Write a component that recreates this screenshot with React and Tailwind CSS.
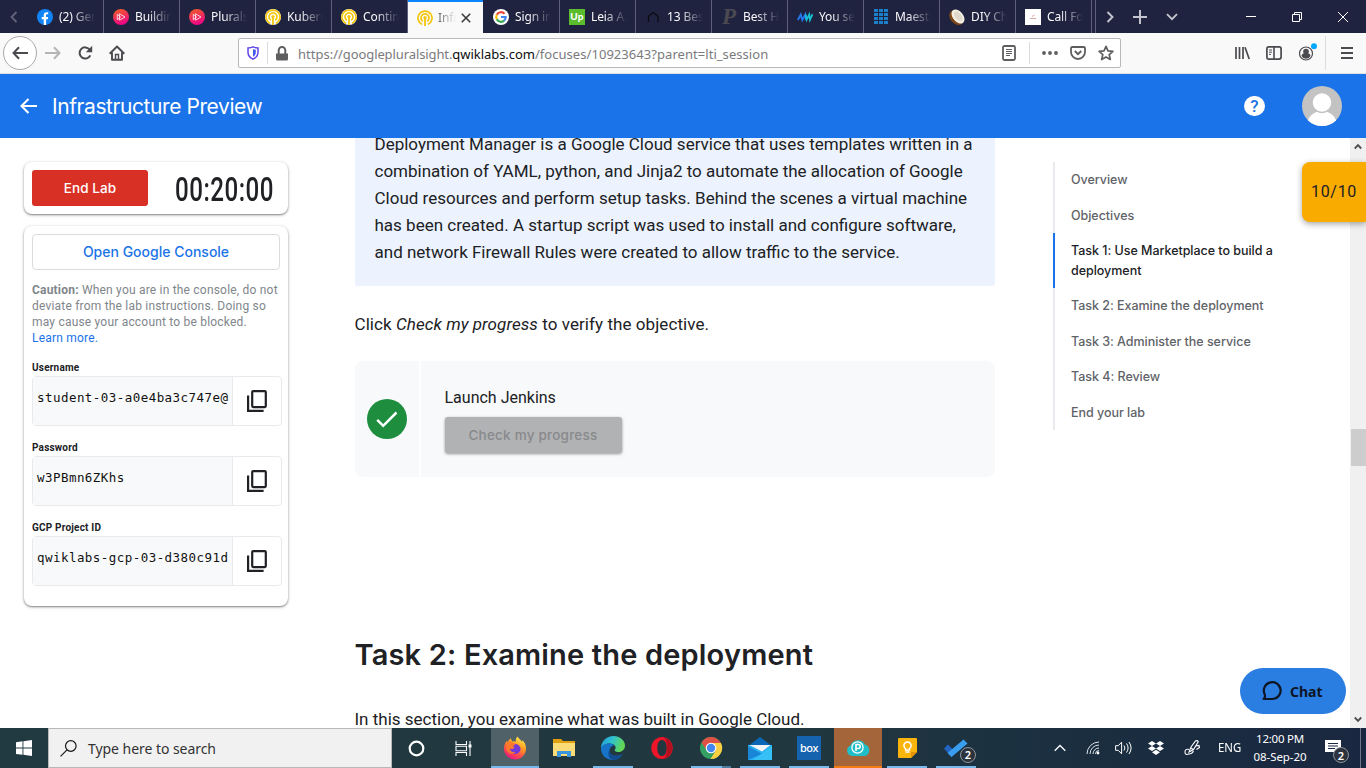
import React from "react";

const gs = "font-['Inter',sans-serif]";

function Facebook() {
  return (
    <svg width="16" height="16" viewBox="0 0 16 16">
      <circle cx="8" cy="8" r="8" fill="#1284f5" />
      <path d="M6.700 16V10.300H4.700V8h2V6.200c0-2 1.100-3 3-3 .7 0 1.500.1 1.500.1v2h-1c-1 0-1.200.6-1.200 1.200V8h2.200l-.4 2.300H9.100V16z" fill="#fff" />
    </svg>
  );
}
function Plural() {
  return (
    <svg width="16" height="16" viewBox="0 0 16 16">
      <defs>
        <linearGradient id="pl" x1="0.3" y1="0" x2="0.6" y2="1">
          <stop offset="0" stopColor="#f15b2a" />
          <stop offset="1" stopColor="#ec008c" />
        </linearGradient>
      </defs>
      <circle cx="8" cy="8" r="8" fill="url(#pl)" />
      <path d="M4.300 5.300v5.400L7.500 8zM6.500 4.800L12 8l-5.500 3.200z" fill="none" stroke="#ffe3ea" strokeWidth="0.900" />
    </svg>
  );
}
function Qwik({ light }) {
  return (
    <svg width="16" height="16" viewBox="0 0 16 16">
      <circle cx="8" cy="8" r="8" fill={light ? "#f9f9fa" : "#fff"} />
      <g fill="none" stroke="#f3c60c" strokeWidth="1.700">
        <path d="M5.200 14.500A7 7 0 1 1 10.800 14.500" />
        <path d="M5.800 11.200A4 4 0 1 1 10.200 11.200" />
      </g>
      <circle cx="8" cy="7.800" r="1.700" fill="#f3c60c" />
      <path d="M7.100 8h1.800v8H7.100z" fill="#f3c60c" />
    </svg>
  );
}
function Google() {
  return (
    <svg width="16" height="16" viewBox="0 0 16 16">
      <circle cx="8" cy="8" r="8" fill="#fff" />
      <g fill="none" strokeWidth="2.200">
        <path d="M11.500 4.700A4.800 4.800 0 0 0 3.800 5.700" stroke="#ea4335" />
        <path d="M3.800 5.700A4.800 4.800 0 0 0 3.800 10.300" stroke="#fbbc05" />
        <path d="M3.800 10.300A4.800 4.800 0 0 0 11.200 11.600" stroke="#34a853" />
        <path d="M11.200 11.600A4.800 4.800 0 0 0 12.700 8H8" stroke="#4285f4" />
      </g>
    </svg>
  );
}
function Up() {
  return <span className="flex h-4 w-4 items-center justify-center bg-[#5bbc2e] pb-0.5 font-['Lato',sans-serif] text-[10px] font-black leading-none tracking-[0.2px] text-white">Up</span>;
}
function House() {
  return (
    <svg width="16" height="16" viewBox="0 0 16 16">
      <path d="M3.500 13V7.200L8.200 3.500 13 7.200V13" fill="none" stroke="#0b0b12" strokeWidth="1.300" />
    </svg>
  );
}
function PLogo() {
  return <span className="block w-4 text-center font-['Liberation_Serif',serif] text-[23px] font-bold italic leading-4 text-[#4a4a50]">P</span>;
}
function Aww() {
  return (
    <svg width="16" height="16" viewBox="0 0 16 16">
      <path d="M.8 11l3-5.500L5.300 11l3-5.500L8.900 11" fill="none" stroke="#2376ee" strokeWidth="1.900" />
      <path d="M8.500 5.500L9.600 10.800l2.600-5.300.8 5.300 2.500-5.600" fill="none" stroke="#16bfd0" strokeWidth="1.800" />
    </svg>
  );
}
function Grid16() {
  return (
    <svg width="16" height="16" viewBox="0 0 16 16" fill="#1b80c9">
      {[0, 1, 2, 3].map((r) => [0, 1, 2].map((c) => <rect key={r + "-" + c} x={1 + c * 5} y={r * 4} width="4" height="3" />))}
    </svg>
  );
}
function Coconut() {
  return (
    <svg width="16" height="16" viewBox="0 0 16 16">
      <ellipse cx="7.300" cy="8.600" rx="8.300" ry="6" transform="rotate(48 7.300 8.600)" fill="#7a4518" />
      <ellipse cx="9" cy="7.500" rx="8" ry="5.200" transform="rotate(50 9 7.500)" fill="#f3ede2" />
      <ellipse cx="9.300" cy="7.200" rx="5.600" ry="3.200" transform="rotate(50 9.300 7.200)" fill="#e0d8cc" />
    </svg>
  );
}
function Call() {
  return (
    <svg width="16" height="16" viewBox="0 0 16 16">
      <path d="M0 0h16v16H0z" fill="#fff" />
      <path d="M7 7.500l2.500-1.500M5 9.500h6" stroke="#dba9a4" strokeWidth="1" />
    </svg>
  );
}

const tabs = [
  { t: "(2) Gene", i: <Facebook /> },
  { t: "Building", i: <Plural /> },
  { t: "Pluralsi", i: <Plural /> },
  { t: "Kuberne", i: <Qwik /> },
  { t: "Continui", i: <Qwik /> },
  { t: "Infr", i: <Qwik light />, active: true },
  { t: "Sign in t", i: <Google /> },
  { t: "Leia A. D", i: <Up /> },
  { t: "13 Best", i: <House /> },
  { t: "Best Ho", i: <PLogo /> },
  { t: "You sen", i: <Aww /> },
  { t: "Maestro", i: <Grid16 /> },
  { t: "DIY Cho", i: <Coconut /> },
  { t: "Call For", i: <Call /> },
];

function Tab({ tab }) {
  if (tab.active)
    return (
      <div className="flex h-[33px] w-[75px] shrink-0 items-center border-t-2 border-[#0a84ff] bg-[#f9f9fa] pl-[9px] text-[#0c0c0d]">
        <span className="h-4 w-4 shrink-0">{tab.i}</span>
        <span className="ml-[5px] w-[18px] shrink-0 overflow-hidden whitespace-nowrap [mask-image:linear-gradient(to_right,#000a,transparent)]">{tab.t}</span>
        <svg className="ml-[5px]" width="10" height="10" viewBox="0 0 10 10"><path d="M.8.8l8.400 8.400M9.200.8L.8 9.200" stroke="#3a3a3c" strokeWidth="1.600" /></svg>
      </div>
    );
  return (
    <div className="flex h-[33px] w-[76px] shrink-0 items-center border-r border-[#5f6079] pl-[9px] pt-px text-[#f9f9fa]">
      <span className="h-4 w-4 shrink-0">{tab.i}</span>
      <span className="ml-[6px] w-[36px] overflow-hidden whitespace-nowrap [mask-image:linear-gradient(to_right,#000_35%,transparent)]">{tab.t}</span>
    </div>
  );
}

function TabBar() {
  return (
    <div className="flex h-[33px] items-center bg-[#202340] font-['Noto_Sans',sans-serif] text-[12px] tracking-[-0.1px]">
      <div className="flex w-7 shrink-0 justify-center">
        <svg width="8" height="12" viewBox="0 0 8 12"><path d="M6.500 1L1.500 6l5 5" fill="none" stroke="#62647a" strokeWidth="1.800" /></svg>
      </div>
      {tabs.slice(0, 6).map((t, i) => <Tab key={i} tab={t} />)}
      <div className="flex pl-px">
        {tabs.slice(6).map((t, i) => <Tab key={i} tab={t} />)}
      </div>
      <div className="flex flex-1 items-center self-stretch text-[#c4c4ce]">
        <span className="ml-[3px] h-full w-px bg-[#5f6079]" />
        <svg className="ml-[10px]" width="8" height="12" viewBox="0 0 8 12"><path d="M1.500 1l5 5-5 5" fill="none" stroke="currentColor" strokeWidth="1.900" /></svg>
        <svg className="ml-[19px]" width="14" height="14" viewBox="0 0 14 14"><path d="M7 0v14M0 7h14" stroke="currentColor" strokeWidth="2" /></svg>
        <svg className="ml-[19px]" width="12" height="8" viewBox="0 0 12 8"><path d="M1 1.200l5 5 5-5" fill="none" stroke="currentColor" strokeWidth="1.900" /></svg>
        <svg className="ml-[68px]" width="10" height="10" viewBox="0 0 10 10"><path d="M0 4.500h10" stroke="#fff" /></svg>
        <svg className="ml-[36px]" width="10" height="10" viewBox="0 0 10 10"><path d="M.5 2.500h7v7h-7zM2.500 2.500v-2h7v7h-2" fill="none" stroke="#fff" /></svg>
        <svg className="ml-[36px]" width="10" height="10" viewBox="0 0 10 10"><path d="M0 0l10 10M10 0L0 10" stroke="#fff" /></svg>
      </div>
    </div>
  );
}

function NavBar() {
  return (
    <div className="flex h-[41px] items-center border-b border-[#e0e0e2] bg-[#f9f9fa] text-[#4a4a4f]">
      <div className="ml-[3px] flex h-[34px] w-[34px] items-center justify-center rounded-full border border-[#a9a9ac] bg-white">
        <svg width="16" height="14" viewBox="0 0 16 14"><path d="M7 1.200L1.500 7 7 12.800M1.500 7H16" fill="none" stroke="currentColor" strokeWidth="2" /></svg>
      </div>
      <svg className="ml-2" width="16" height="14" viewBox="0 0 16 14"><path d="M9 1.200L14.500 7 9 12.800M14.500 7H0" fill="none" stroke="#b5b5b8" strokeWidth="2" /></svg>
      <svg className="ml-4" width="16" height="16" viewBox="0 0 16 16"><path d="M13.300 10.300A5.600 5.600 0 1 1 12.600 4.500" fill="none" stroke="currentColor" strokeWidth="2" /><path d="M15.200.8v6.400H8.800z" fill="currentColor" /></svg>
      <svg className="ml-4" width="16" height="16" viewBox="0 0 16 16"><path d="M.7 8.700L8 1.500l7.300 7.200M3 7.500v7.300h10V7.500" fill="none" stroke="currentColor" strokeWidth="1.900" strokeLinejoin="round" /><path d="M6.500 15V9.500h3V15" fill="none" stroke="currentColor" strokeWidth="1.400" /></svg>
      <div className="ml-[113px] flex h-[30px] w-[883px] items-center rounded-[2px] border border-[#b9b9bb] bg-white">
        <svg className="ml-2" width="12" height="14" viewBox="0 0 12 14"><path d="M6 .9c1.500.8 3 1 5 1v4.300c0 3.300-2 5.500-5 6.900C3 11.700 1 9.500 1 6.200V1.900c2 0 3.500-.2 5-1z" fill="none" stroke="#6146e8" strokeWidth="1.500" /><path d="M6 3.200v7.600C7.700 9.700 8.800 8.300 8.800 6.200V3.700C7.800 3.600 7 3.500 6 3.200z" fill="#4257e8" /></svg>
        <span className="ml-2 h-[22px] w-px bg-[#dcdcde]" />
        <svg className="ml-2" width="12" height="15" viewBox="0 0 12 15"><path d="M0 7.500h12V13a1.500 1.500 0 0 1-1.500 1.500h-9A1.500 1.500 0 0 1 0 13z" fill="#5e5e61" /><path d="M2.700 8V4.300a3.300 3.300 0 0 1 6.600 0V8" fill="none" stroke="#5e5e61" strokeWidth="2" /></svg>
        <span className="ml-[10px] w-[704px] whitespace-nowrap pt-[3px] font-['Noto_Sans',sans-serif] text-[13px] text-[#7a7a7d]">https://<span className="tracking-[-0.1px]">googlepluralsight.</span><span className="tracking-[-0.050px] text-[#0c0c0d]">qwiklabs.com</span><span className="tracking-[0.050px]">/focuses/10923643?parent=lti_session</span></span>
        <svg width="14" height="16" viewBox="0 0 14 16"><rect x="1" y="1" width="12" height="14" rx="1.500" fill="none" stroke="#5e5e61" strokeWidth="1.800" /><path d="M4 4.500h6M4 6.500h6M4 8.500h6M4 10.500h4" stroke="#5e5e61" /></svg>
        <span className="ml-[13px] h-[22px] w-px bg-[#dcdcde]" />
        <svg className="ml-3" width="16" height="4" viewBox="0 0 16 4" fill="#5e5e61"><circle cx="2" cy="2" r="1.900" /><circle cx="8" cy="2" r="1.900" /><circle cx="14" cy="2" r="1.900" /></svg>
        <svg className="ml-3" width="16" height="14" viewBox="0 0 16 14"><path d="M1 2.200Q1 1 2.200 1h11.600Q15 1 15 2.200V6a7 7 0 0 1-14 0z" fill="none" stroke="#5e5e61" strokeWidth="1.800" /><path d="M4.800 5L8 8.200 11.200 5" fill="none" stroke="#5e5e61" strokeWidth="1.900" /></svg>
        <svg className="ml-3" width="16" height="16" viewBox="0 0 16 16"><path d="M8 1.300l2 4.500 4.900.5-3.700 3.300 1.100 4.900L8 12l-4.300 2.500 1.100-4.900L1.100 6.300 6 5.800z" fill="none" stroke="#5e5e61" strokeWidth="1.700" strokeLinejoin="round" /></svg>
      </div>
      <svg className="ml-[114px]" width="15" height="14" viewBox="0 0 15 14"><path d="M1 1v12M4.500 1v12M8 1v12M10 1.200L14.200 13" fill="none" stroke="currentColor" strokeWidth="1.700" /></svg>
      <svg className="ml-4" width="16" height="14" viewBox="0 0 16 14"><rect x=".9" y=".9" width="14.200" height="12.200" rx="2" fill="none" stroke="currentColor" strokeWidth="1.700" /><path d="M8 1v12" stroke="currentColor" strokeWidth="1.600" /><path d="M3 4h3M3 6.200h3M3 8.400h2" stroke="currentColor" /></svg>
      <svg className="ml-[17px]" width="20" height="22" viewBox="0 0 20 22"><circle cx="7" cy="11.500" r="6.500" fill="none" stroke="currentColor" strokeWidth="1.200" /><circle cx="7" cy="9.500" r="2.800" fill="currentColor" /><path d="M2.500 14a4.500 3 0 0 1 9 0A5 5 0 0 1 2.500 14z" fill="currentColor" /><circle cx="15" cy="4.200" r="3" fill="#00a9ff" /></svg>
      <span className="ml-[6px] h-[34px] w-px bg-[#dcdcde]" />
      <svg className="ml-[15px]" width="12" height="12" viewBox="0 0 12 12"><path d="M0 1h12M0 6h12M0 11h12" stroke="currentColor" strokeWidth="2" /></svg>
    </div>
  );
}

function Header() {
  return (
    <header className="flex h-16 items-center bg-[#1a73e8] text-white">
      <svg className="ml-5" width="17" height="16" viewBox="0 0 17 16"><path d="M8.500 1L1.500 8l7 7M1.500 8H17" fill="none" stroke="#fff" strokeWidth="2.100" /></svg>
      <h1 className={gs + " ml-[15px] w-[1192px] pt-0.5 text-[21px] tracking-[-0.42px]"}>Infrastructure Preview</h1>
      <span className="flex h-5 w-[21px] items-center justify-center rounded-full bg-white font-['Roboto',sans-serif] text-[17px] font-medium leading-none text-[#1a73e8]">?</span>
      <svg className="ml-[37px]" width="40" height="40" viewBox="0 0 40 40">
        <defs><clipPath id="av"><circle cx="20" cy="20" r="20" /></clipPath></defs>
        <g clipPath="url(#av)"><path d="M0 0h40v40H0z" fill="#c3c3c3" /><ellipse cx="20" cy="38" rx="14.500" ry="13" fill="#fff" /><circle cx="20" cy="16.500" r="10" fill="#fff" stroke="#c3c3c3" strokeWidth="1.500" /></g>
      </svg>
    </header>
  );
}

function Field({ label, value }) {
  return (
    <div className="mb-[12px]">
      <div className="h-[18px] font-['Roboto',sans-serif] text-[10px] font-bold leading-[20px] tracking-[0.2px] text-[#202124]">{label}</div>
      <div className="flex h-[50px] w-[250px] rounded-[4px] border border-[#e8eaed]">
        <div className="w-[200px] overflow-hidden whitespace-nowrap border-r border-[#e8eaed] bg-[#f8f9fa] pl-[4px] pt-[12px] font-['DejaVu_Sans_Mono',monospace] text-[12.500px] leading-[18px] tracking-[0.45px] text-[#111]">{value}</div>
        <div className="flex flex-1 items-center justify-center">
          <svg width="20" height="22" viewBox="0 0 20 22"><rect x="5.200" y="1.100" width="13.600" height="16" rx="1" fill="none" stroke="#202124" strokeWidth="2.200" /><path d="M1.100 5.500v15.400h15.500" fill="none" stroke="#202124" strokeWidth="2.200" /></svg>
        </div>
      </div>
    </div>
  );
}

const card = "rounded-[8px] bg-white shadow-[0_1px_2px_rgba(0,0,0,0.42),0_1px_4px_rgba(0,0,0,0.14)]";

function Sidebar() {
  return (
    <aside className="w-[354.500px] shrink-0 pl-6 pt-6">
      <div className={card + " flex h-[52px] w-[264px] items-center pl-2"}>
        <button className={gs + " h-9 w-[116px] rounded-[3px] bg-[#d93025] text-[13.500px] font-medium tracking-[0.1px] text-white"}>End Lab</button>
        <div className="ml-[27px] w-[98px] origin-left scale-x-[0.710] whitespace-nowrap pt-0.5 font-['Roboto',sans-serif] text-[34px] font-medium leading-[52px] tracking-[0.700px] text-[#202124]">00:20:00</div>
      </div>
      <div className={card + " mt-3 h-[380px] w-[264px] px-2 pt-2"}>
        <button className={gs + " block h-9 w-[248px] rounded-[4px] border border-[#dadce0] pb-px text-[14px] font-medium text-[#1a73e8]"}>Open Google Console</button>
        <p className="mt-3 h-[64px] whitespace-nowrap font-['Roboto',sans-serif] text-[12px] leading-4 tracking-[0.2px] text-[#80868b]">
          <b>Caution:</b> When you are in the console, do not<br />deviate from the lab instructions. Doing so<br />may cause your account to be blocked.<br /><span className="text-[#1a73e8]">Learn more.</span>
        </p>
        <div className="mt-[12px]">
          <Field label="Username" value="student-03-a0e4ba3c747e@" />
          <Field label="Password" value="w3PBmn6ZKhs" />
          <Field label="GCP Project ID" value="qwiklabs-gcp-03-d380c91d" />
        </div>
      </div>
    </aside>
  );
}

function Article() {
  return (
    <main className="w-[640px] shrink-0 font-['Roboto',sans-serif] text-[17px] text-[#202124]">
      <div className="h-[148px] overflow-hidden rounded-b-[2px] bg-[#ecf3fe] pl-5">
        <p className="-mt-[7px] whitespace-nowrap leading-[27px]">
          Deployment Manager is a Google Cloud service that uses templates written in a<br />combination of YAML, python, and Jinja2 to automate the allocation of Google<br />Cloud resources and perform setup tasks. Behind the scenes a virtual machine<br />has been created. A startup script was used to install and configure software,<br />and network Firewall Rules were created to allow traffic to the service.
        </p>
      </div>
      <p className="mt-[25px] leading-[27px] tracking-[0.070px]">Click <i>Check my progress</i> to verify the objective.</p>
      <div className="mt-[23px] flex h-[116px] overflow-hidden rounded-[8px] bg-[#f8f9fb]">
        <div className="flex w-[66px] items-center justify-center border-r-2 border-white">
          <svg width="40" height="40" viewBox="0 0 40 40"><circle cx="20" cy="20" r="20" fill="#1e8e3e" /><path d="M10.200 20.800l6 6L29.500 13.500" fill="none" stroke="#fff" strokeWidth="2.500" /></svg>
        </div>
        <div className="pl-6 pt-[23px]">
          <div className="text-[16px] leading-[27px]">Launch Jenkins</div>
          <button className={gs + " mt-[6px] block h-9 w-[177px] rounded-[3px] bg-[#b1b2b4] text-[13.500px] font-medium tracking-[0.22px] text-[#88898c] shadow-[0_1px_3px_rgba(0,0,0,0.4)]"}>Check my progress</button>
        </div>
      </div>
      <h2 className={gs + " mt-[158px] whitespace-nowrap text-[29px] font-semibold leading-10 tracking-[0.17px]"}>Task 2: Examine the deployment</h2>
      <p className="mt-[31px] leading-[27px]">In this section, you examine what was built in Google Cloud.</p>
    </main>
  );
}

const toc = ["Overview", "Objectives", "Task 1: Use Marketplace to build a deployment", "Task 2: Examine the deployment", "Task 3: Administer the service", "Task 4: Review", "End your lab"];

function Toc() {
  return (
    <nav className={gs + " ml-[58.500px] mt-6 flex h-[268px] w-[237px] flex-col text-[12.500px] font-medium leading-5 tracking-[-0.030px] text-[#5f6368]"}>
      {toc.map((t, i) => (
        <div key={t} className={i === 2 ? "h-[55px] shrink-0 border-l-2 border-[#1a73e8] pl-4 pt-[8px] text-[#202124]" : "h-[35.500px] shrink-0 border-l-2 border-[#e8eaed] pl-4 pt-[8px]"}>{t}</div>
      ))}
    </nav>
  );
}

function ScrollBar() {
  return (
    <div className="flex w-4 flex-col items-center bg-[#f0f0f0]">
      <svg className="mt-[5px]" width="8" height="7" viewBox="0 0 8 7"><path d="M.8 5.500L4 2.200l3.200 3.300" fill="none" stroke="#505050" strokeWidth="1.900" /></svg>
      <div className="mt-[279px] h-[37px] w-[15px] bg-[#cdcdcd]" />
      <svg className="mb-[5px] mt-auto" width="8" height="7" viewBox="0 0 8 7"><path d="M.8 1.500L4 4.800l3.200-3.300" fill="none" stroke="#505050" strokeWidth="1.900" /></svg>
    </div>
  );
}

function Firefox() {
  return (
    <svg width="24" height="24" viewBox="0 0 24 24">
      <defs>
        <linearGradient id="ff" x1=".8" y1="0" x2=".3" y2="1"><stop offset="0" stopColor="#fff44f" /><stop offset=".4" stopColor="#ff9b22" /><stop offset=".75" stopColor="#ff4150" /><stop offset="1" stopColor="#e0158c" /></linearGradient>
      </defs>
      <path d="M14.500.5c1.200 2.300 3.500 3.500 4.600 5.200.3-.5.200-1.200.1-1.700 2.500 2 3.800 5.200 3.800 8.500A11 11 0 0 1 1 12.500C1 9.500 2.100 6.500 4 4.500c0 .7.100 1.200.4 1.700C5.500 4.500 7 3.500 7.200 2.200c1 .8 1.700 2 1.800 3.300 1.500-.3 3-.3 4 .2C12.400 4 13 2 14.500.5z" fill="url(#ff)" />
      <path d="M8 9c2.500-2.500 8-1 9.300 2.500 1 3.500-1.500 6.500-5 6.500-3.300 0-5.700-2.500-5.300-5.500 2 1.300 4 .2 4.500-1.300C9.500 11 9 10 8 9z" fill="#7139d8" />
      <path d="M4 6.500c2-1.500 5-1 6 .5 1 .2 2 .2 2.500.8C11 9.500 10.500 12 7 12.500c0 3 3 4.500 6 3.500C9 20 3 17 3 11z" fill="#ff7a2a" opacity=".9" />
    </svg>
  );
}
function Explorer() {
  return (
    <svg width="24" height="20" viewBox="0 0 24 20"><path d="M1 1h8l2 2h12v15H1z" fill="#e0a010" /><path d="M1 5h22v13H1z" fill="#fcdc77" /><path d="M5 19v-6h14v6h-4v-3H9v3z" fill="#3a96dd" /></svg>
  );
}
function Edge() {
  return (
    <svg width="24" height="24" viewBox="0 0 24 24">
      <defs><linearGradient id="eg" x1="0" y1="0" x2="1" y2=".3"><stop offset="0" stopColor="#2196d8" /><stop offset=".5" stopColor="#2fc2cf" /><stop offset="1" stopColor="#62d654" /></linearGradient></defs>
      <path d="M0 12C0 5 5.500 0 12.500 0 19 0 24 4.500 24 9.500c0 4-3 6.500-6.500 6.500-3 0-4.500-1-3.500-2.500 2-3-1-6-5-6C4 7.500 1 10 0 13z" fill="url(#eg)" />
      <path d="M0 12.500C.5 9.500 4 7.500 8.500 7.500c2.500 0 4 .8 5 2-3 0-5 2.500-5 5.500 0 4 5 6.500 13 3.500C19.500 22 16 24 12 24 5 24 0 19 0 12.500z" fill="#1673c7" />
      <path d="M8.500 14c0 5 6 7.500 13 4.500-2 3.500-6 5.500-9.500 5.500-4-1-6-6-3.500-10z" fill="#124b8f" />
    </svg>
  );
}
function Opera() {
  return <svg width="24" height="24" viewBox="0 0 24 24"><path fillRule="evenodd" d="M12 1c6.200 0 10.700 5 10.700 11S18.200 23 12 23 1.300 18 1.300 12 5.800 1 12 1zm0 3c-3 0-4.700 3.500-4.700 8s1.700 8 4.700 8 4.700-3.500 4.700-8-1.700-8-4.700-8z" fill="#ed1528" /><path d="M14 1.500c11 2.500 11 18.500 0 21 2-2 3-5.500 3-10.500s-1-8.500-3-10.500z" fill="#b40f1e" /></svg>;
}
function Chrome() {
  return (
    <svg width="24" height="24" viewBox="0 0 24 24">
      <circle cx="12" cy="12" r="11" fill="#34a061" />
      <path d="M2.500 6.500a11 11 0 0 1 19 0L22 7.500H12L7.500 14z" fill="#df5144" />
      <path d="M12 7h9.900A11 11 0 0 1 11.500 23l5-8z" fill="#fbcf42" />
      <circle cx="12" cy="12" r="5.300" fill="#fff" /><circle cx="12" cy="12" r="4.200" fill="#4687ef" />
    </svg>
  );
}
function Mail() {
  return <svg width="24" height="23" viewBox="0 0 24 23"><path d="M12 0l12 9H0z" fill="#0b66b5" /><path d="M0 8h24v15H0z" fill="#2cb2f3" /><path d="M1.500 8h21L14 14.500z" fill="#f2f5f8" /><path d="M0 9l14 8-14 6z" fill="#1a86d8" /><path d="M24 9L5 23h19z" fill="#35c1f5" /></svg>;
}
function Pcloud() {
  return <svg width="26" height="20" viewBox="0 0 26 20"><path d="M6.500 18a5.500 5.500 0 0 1-1-10.500A8 8 0 0 1 20 6.500a6 6 0 0 1 0 11.500z" fill="#20bec6" /><circle cx="12.500" cy="9.500" r="5.600" fill="none" stroke="#fff" strokeWidth="1.300" /><path d="M11 13V6.500h2.200a2 2 0 0 1 0 4H11" fill="none" stroke="#fff" strokeWidth="1.600" /></svg>;
}
function Keep() {
  return <svg width="19" height="20" viewBox="0 0 19 20"><path d="M1 0h17q1 0 1 1v13l-6 6H1q-1 0-1-1V1q0-1 1-1z" fill="#f9b50b" /><path d="M19 14l-6 6v-6z" fill="#e2930a" /><path d="M7.500 12V10.500a3.600 3.600 0 1 1 4 0V12zM7.500 14h4" fill="none" stroke="#fff" strokeWidth="1.500" /></svg>;
}
function Badge({ className }) {
  return <span className={"absolute flex h-4 w-4 items-center justify-center rounded-full border border-[#8c949d] bg-[#2c333c] text-[11px] font-semibold leading-none text-white " + className}>2</span>;
}

const apps = [
  { i: <svg width="17" height="17" viewBox="0 0 17 17"><circle cx="8.500" cy="8.500" r="6.800" fill="none" stroke="#fff" strokeWidth="2.200" /></svg>, c: "" },
  { i: <svg className="mr-[3px]" width="17" height="15" viewBox="0 0 17 15"><path d="M1 0v3.500h10.500V0M1 15v-3.500h10.500V15M1 5.200h10.500v4.600H1zM15 0v15" fill="none" stroke="#fff" strokeWidth="1.100" /><path d="M13.500 3.500h3v3h-3z" fill="#fff" /></svg>, c: "" },
  { i: <Firefox />, c: "ml-px bg-[#516168]", b: "w-12 bg-[#76b9ed]" },
  { i: <Explorer />, c: "" },
  { i: <Edge />, c: "", b: "w-10 bg-[#76b9ed]" },
  { i: <Opera />, c: "" },
  { i: <Chrome />, c: "", b: "w-10 bg-[linear-gradient(to_right,#76b9ed_31px,#4d7c9e_31px)]" },
  { i: <Mail />, c: "", b: "w-10 bg-[#76b9ed]" },
  { i: <span className="flex h-6 w-6 items-center justify-center bg-[#1563ae] text-[11px] font-medium tracking-[-0.4px] text-white">box</span>, c: "", b: "w-10 bg-[#76b9ed]" },
  { i: <Pcloud />, c: "bg-[#a5653a]", b: "w-12 bg-[#f57c14]" },
  { i: <Keep />, c: "", b: "w-10 bg-[#76b9ed]" },
  { i: <span className="relative flex"><svg width="24" height="19" viewBox="0 0 24 19"><path d="M0 9.500l4-4 8 8-4.500 4.500z" fill="#2264c4" /><path d="M7.500 18l-4-4L19.500.5l4 4z" fill="#3a9ef0" /></svg><Badge className="left-[16px] top-[8px]" /></span>, c: "", b: "w-10 bg-[#76b9ed]" },
];

function Taskbar() {
  return (
    <footer className="flex h-10 bg-[linear-gradient(to_right,#213940,#21373f_60%,#1b3040_75%,#1a2740)] font-['Noto_Sans',sans-serif] text-[12px] text-white">
      <div className="flex w-12 items-center justify-center">
        <svg width="16" height="16" viewBox="0 0 16 16" fill="#fff"><path d="M0 2.200l6.500-.9v6.300H0zM7.400 1.200L16 0v7.600H7.400zM0 8.500h6.500v6.300L0 13.900zM7.400 8.500H16V16l-8.600-1.200z" /></svg>
      </div>
      <div className="flex w-[344px] items-center border border-[#b9b9b9] bg-[#f1f1f1]">
        <svg className="ml-[11px]" width="17" height="17" viewBox="0 0 17 17"><circle cx="10.800" cy="6" r="5.300" fill="none" stroke="#1a1a1a" strokeWidth="1.200" /><path d="M7 9.800L.5 16.300" stroke="#1a1a1a" strokeWidth="1.200" /></svg>
        <span className="ml-[11px] text-[14px] tracking-[-0.050px] text-[#333]">Type here to search</span>
      </div>
      <div className="flex gap-px">
        {apps.map((a, i) => (
          <div key={i} className={"relative flex w-12 shrink-0 items-center justify-center " + a.c}>
            {a.i}
            {a.b && <span className={"absolute bottom-0 left-1/2 h-0.5 -translate-x-1/2 " + a.b} />}
          </div>
        ))}
      </div>
      <div className="flex flex-1 items-center">
        <svg className="ml-[74px]" width="12" height="8" viewBox="0 0 12 8"><path d="M.7 6.800L6 1.500l5.300 5.300" fill="none" stroke="#fff" strokeWidth="1.300" /></svg>
        <svg className="ml-[20px]" width="15" height="14" viewBox="0 0 15 14"><g fill="none" stroke="#dfe3e8" strokeWidth="1"><path d="M1 13A12 12 0 0 1 13 1M4 13a9 9 0 0 1 9-9M7 13a6 6 0 0 1 6-6M9.500 13a3.500 3.500 0 0 1 3.500-3.500" /></g><circle cx="12" cy="12" r="1.400" fill="#fff" /></svg>
        <svg className="ml-[14px]" width="18" height="14" viewBox="0 0 18 14"><path d="M.6 4.700h2.700L6.600 1.200v11.600L3.300 9.300H.6zM9 4.500q1.800 2.500 0 5M11.500 2.500q3.200 4.500 0 9M14 1q4.200 6 0 12" fill="none" stroke="#fff" strokeWidth="1" /></svg>
        <svg className="ml-[15px]" width="16" height="14" viewBox="0 0 16 14" fill="#fff"><path d="M4 0l4 2.500L4 5 0 2.500zM12 0l4 2.500L12 5 8 2.500zM4 5l4 2.500L4 10 0 7.500zM12 5l4 2.500-4 2.500-4-2.500zM8 8.800l4 2.500L8 14l-4-2.700z" /></svg>
        <svg className="ml-[20px]" width="17" height="16" viewBox="0 0 17 16"><path d="M5 12l2-5 4.500-6q1.800-1 2.800.8L9.500 9.500 5 12zM7 8l2 1.500M5 9.500Q1 8.500 1 12t4 2q3 0 4.500-3M12 6l3-.5.5 2-3 2" fill="none" stroke="#fff" strokeWidth="1.100" /></svg>
        <span className="ml-[17px] w-[23px] origin-left scale-x-[0.950]">ENG</span>
        <div className="ml-[8px] flex w-[62px] flex-col items-center whitespace-nowrap text-[11.500px] leading-[18px] tracking-[-0.25px]"><span>12:00 PM</span><span className="tracking-[-0.050px]">08-Sep-20</span></div>
        <span className="relative ml-[14px] flex"><svg width="17" height="16" viewBox="0 0 17 16"><path d="M0 0h16v12h-5L9 15v-3H0z" fill="#fff" /><path d="M3 3.500h10M3 6h10M3 8.500h7" stroke="#1a2740" /></svg><Badge className="left-[8px] top-[7px]" /></span>
        <span className="ml-[18px] h-10 w-px bg-[#6d7684]" />
      </div>
    </footer>
  );
}

export default function App() {
  return (
    <div className="relative flex h-[768px] w-[1366px] flex-col overflow-hidden bg-white">
      <TabBar />
      <NavBar />
      <Header />
      <div className="flex h-[590px] overflow-hidden">
        <Sidebar />
        <Article />
        <Toc />
        <div className="ml-[60px] flex"><ScrollBar /></div>
      </div>
      <Taskbar />
      <div className="absolute right-0 top-[162px] flex h-[60px] w-16 items-center justify-center rounded-l-[8px] bg-[#f9ab00] font-['Roboto',sans-serif] text-[16px] tracking-[0.7px] text-[#202124] shadow-[0_2px_6px_rgba(0,0,0,0.35)]">10/10</div>
      <button className="absolute left-[1240px] top-[668px] flex h-[46px] w-[106px] items-center rounded-full bg-[#2a7de1] pl-[22px] font-['Noto_Sans',sans-serif] text-[14px] font-bold text-[#0e1524]">
        <svg width="20" height="20" viewBox="0 0 20 20"><path d="M2.800 13.500A8.400 8.400 0 1 1 10.200 18H1.600q2-1.500 1.200-4.500z" fill="none" stroke="#0e1524" strokeWidth="2.200" strokeLinejoin="round" /></svg>
        <span className="ml-[8px]">Chat</span>
      </button>
    </div>
  );
}
